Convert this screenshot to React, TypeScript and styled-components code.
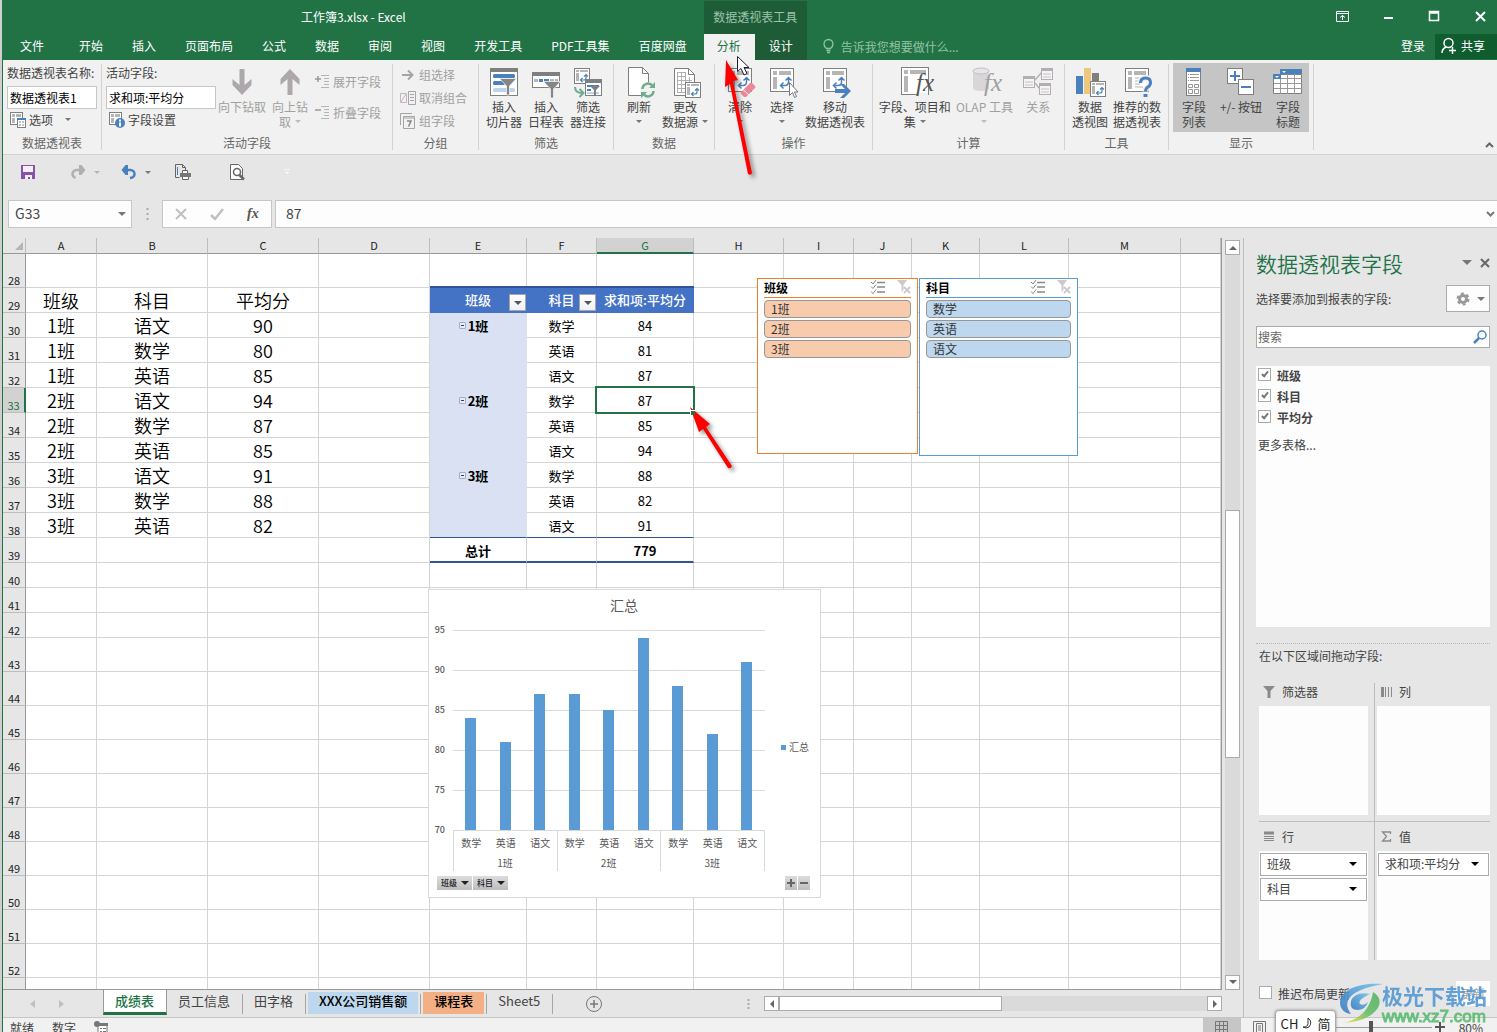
import React from "react";
import styled, { createGlobalStyle, css } from "styled-components";

const GREEN = "#217346";
const FONT = '"Noto Sans CJK SC", "Open Sans", sans-serif';

const Global = createGlobalStyle`
  *, *::before, *::after { box-sizing: border-box; }
  html, body { margin: 0; height: 100%; overflow: hidden; }
  body { font: 12px/15px ${FONT}; color: #444; background: #e6e6e6; }
  button, input { font: inherit; color: inherit; margin: 0; }
  button { padding: 0; border: 0; background: none; }
  svg { display: block; flex: none; overflow: visible; }
`;

/* ---------- window frame ---------- */
const Desktop = styled.div`
  position: relative;
  height: 100vh;
  padding-left: 2px;
  background: #cfcfcf;
  overflow: hidden;
`;
const Window = styled.div`
  height: 100%;
  display: flex;
  flex-direction: column;
  border-left: 1px solid ${GREEN};
  background: #e6e6e6;
`;
const Caret = styled.span<{ $c?: string; $s?: number }>`
  display: inline-block;
  width: 0;
  height: 0;
  border: ${(p) => p.$s ?? 3}px solid transparent;
  border-top-color: ${(p) => p.$c ?? "#777"};
  border-bottom: 0;
`;

/* ---------- header ---------- */
const Header = styled.header`
  flex: none;
  display: flex;
  height: 60px;
  background: ${GREEN};
  color: #fff;
`;
const HeadBlock = styled.div<{ $grow?: boolean }>`
  display: flex;
  flex-direction: column;
  flex: ${(p) => (p.$grow ? 1 : "none")};
`;
const TitleRow = styled.div`
  height: 34px;
  line-height: 34px;
  text-align: center;
`;
const TabRow = styled.nav`
  flex: 1;
  display: flex;
  gap: 1px;
  padding-right: 3px;
`;
const Tab = styled.button<{ $file?: boolean; $active?: boolean }>`
  padding: 0 ${(p) => (p.$file ? 17 : 14)}px 4px;
  margin-right: ${(p) => (p.$file ? 3 : 0)}px;
  ${(p) =>
    p.$active &&
    css`
      background: #f1f1f1;
      color: ${GREEN};
      padding: 0 14px 4px 13px;
    `}
`;
const Context = styled(HeadBlock)`
  margin-top: 1px;
  background: #1e5c38;
`;
const ContextTitle = styled.div`
  height: 33px;
  line-height: 32px;
  text-align: center;
  color: #9cc3ab;
`;
const ContextTabs = styled.nav`
  flex: 1;
  display: flex;
`;
const WinButtons = styled.div`
  height: 34px;
  display: flex;
  justify-content: flex-end;
  align-items: center;
  gap: 33px;
  padding: 0 10px 2px 0;
`;
const TellRow = styled.div`
  flex: 1;
  display: flex;
  align-items: stretch;
`;
const TellMe = styled.button`
  display: flex;
  align-items: center;
  gap: 7px;
  padding: 0 0 2px 16px;
  color: #93c2a3;
`;
const SignIn = styled.button`
  margin-left: auto;
  padding: 0 10px 4px;
`;
const Share = styled.button`
  display: flex;
  align-items: center;
  gap: 4px;
  height: 25px;
  padding: 0 12px 3px 6px;
  background: #0f5c2f;
`;

/* ---------- ribbon ---------- */
const Ribbon = styled.div`
  flex: none;
  height: 95px;
  display: flex;
  position: relative;
  padding: 4px 0;
  background: #f1f1f1;
  border-bottom: 1px solid #d2d2d2;
`;
const Group = styled.section<{ $w: number }>`
  flex: none;
  width: ${(p) => p.$w}px;
  display: flex;
  flex-direction: column;
  border-right: 1px solid #d2d2d2;
`;
const GroupBody = styled.div<{ $pad?: number }>`
  flex: 1;
  display: flex;
  padding: 0 ${(p) => p.$pad ?? 4}px;
`;
const GroupName = styled.h2`
  margin: 0;
  height: 15px;
  font: inherit;
  text-align: center;
  color: #666;
`;
const BigButton = styled.button<{ $w: number; $off?: boolean }>`
  width: ${(p) => p.$w}px;
  display: flex;
  flex-direction: column;
  align-items: center;
  padding-top: 3px;
  white-space: nowrap;
  color: ${(p) => (p.$off ? "#a0a0a0" : "#444")};
  span.line {
    display: flex;
    align-items: center;
    gap: 4px;
    height: 15px;
  }
`;
const Pressed = styled.div`
  display: flex;
  height: 69px;
  margin-top: -1px;
  padding-top: 1px;
  background: #c5c5c5;
`;
const FieldColumn = styled.div`
  display: flex;
  flex-direction: column;
  align-items: flex-start;
  padding-top: 1px;
`;
const RibbonInput = styled.input<{ $w: number }>`
  width: ${(p) => p.$w}px;
  height: 23px;
  margin-top: 6px;
  padding: 0 2px 1px;
  border: 1px solid #c6c6c6;
  background: #fff;
  color: #000;
`;
const SmallButton = styled.button<{ $off?: boolean; $h?: number }>`
  display: flex;
  align-items: center;
  gap: 3px;
  height: ${(p) => p.$h ?? 23}px;
  padding: 0 0 2px 3px;
  white-space: nowrap;
  color: ${(p) => (p.$off ? "#a0a0a0" : "#444")};
  ${Caret} { margin-left: 9px; }
`;
const SmallStack = styled.div<{ $top: number }>`
  display: flex;
  flex-direction: column;
  padding-top: ${(p) => p.$top}px;
`;
const Collapse = styled.button`
  margin-left: auto;
  align-self: flex-end;
  padding: 0 3px 2px 0;
`;

/* ---------- quick access and formula bar ---------- */
const QuickBar = styled.div`
  flex: none;
  height: 35px;
  display: flex;
  align-items: center;
  padding: 0 0 1px 17px;
`;
const QuickButton = styled.button<{ $w: number }>`
  width: ${(p) => p.$w}px;
  display: flex;
  align-items: center;
  gap: 8px;
`;
const FormulaRow = styled.div`
  flex: none;
  display: flex;
  height: 48px;
  padding: 10px 0 10px 5px;
`;
const Box = styled.div`
  display: flex;
  align-items: center;
  border: 1px solid #c6c6c6;
  background: #fdfdfd;
`;
const NameBox = styled(Box)`
  width: 124px;
  padding-right: 5px;
  input {
    flex: 1;
    min-width: 0;
    padding: 0 6px 1px;
    border: 0;
    background: none;
    font-size: 14px;
  }
`;
const Grip = styled.div`
  width: 30px;
  display: grid;
  place-items: center;
`;
const FxBox = styled(Box)`
  width: 110px;
  justify-content: space-between;
  padding: 0 11px 0 12px;
`;
const FormulaBox = styled(Box)`
  flex: 1;
  margin-left: 3px;
  padding-right: 2px;
  border-right: 0;
  input {
    flex: 1;
    border: 0;
    padding: 0 10px 1px;
    background: none;
    font-size: 14px;
  }
`;

/* ---------- sheet ---------- */
const Main = styled.main`
  flex: 1;
  min-height: 0;
  display: flex;
`;
const SheetColumn = styled.div`
  flex: 1;
  min-width: 0;
  display: flex;
  flex-direction: column;
`;
const GridRow = styled.div`
  flex: 1;
  min-height: 0;
  display: flex;
`;
const Canvas = styled.div`
  flex: 1;
  min-width: 0;
  position: relative;
  overflow: hidden;
  border-right: 1px solid #999;
  border-bottom: 1px solid #999;
  background: #fff;
`;
const Grid = styled.table`
  width: 100%;
  table-layout: fixed;
  border-collapse: separate;
  border-spacing: 0;
  color: #000;
`;
const ColHead = styled.th<{ $on?: boolean }>`
  height: 16px;
  padding: 0;
  font-weight: 400;
  font-size: 11px;
  line-height: 13px;
  background: ${(p) => (p.$on ? "#d2d2d2" : "#e6e6e6")};
  color: ${(p) => (p.$on ? GREEN : "#222")};
  border-right: 1px solid #bdbdbd;
  border-bottom: ${(p) => (p.$on ? `2px solid ${GREEN}` : "1px solid #999")};
`;
const RowHead = styled.th<{ $on?: boolean }>`
  padding: 0;
  vertical-align: bottom;
  font-weight: 400;
  font-size: 11px;
  line-height: 13px;
  background: ${(p) => (p.$on ? "#d2d2d2" : "#e6e6e6")};
  color: ${(p) => (p.$on ? GREEN : "#222")};
  border-right: ${(p) => (p.$on ? `2px solid ${GREEN}` : "1px solid #999")};
  border-bottom: 1px solid #bdbdbd;
`;
type Kind = "plain" | "head" | "band" | "last" | "bandLast" | "total";
const Cell = styled.td<{ $kind: Kind; $big?: boolean; $bold?: boolean }>`
  position: relative;
  padding: ${(p) => (p.$big || p.$kind === "head" ? 0 : 2)}px 0 0;
  text-align: center;
  white-space: nowrap;
  border-right: 1px solid #d4d4d4;
  border-bottom: 1px solid #d4d4d4;
  font-size: ${(p) => (p.$big ? 18 : 13)}px;
  line-height: 20px;
  font-weight: ${(p) => (p.$bold ? 700 : p.$big ? 350 : 400)};
  ${(p) =>
    p.$kind === "head" &&
    css`
      background: #4472c4;
      color: #fff;
      font-weight: 500;
      border-color: #4472c4;
      box-shadow: 0 -2px 0 #2f5597;
    `}
  ${(p) =>
    (p.$kind === "band" || p.$kind === "bandLast") &&
    css`
      background: #d9e1f2;
      border-color: #d9e1f2;
    `}
  ${(p) => (p.$kind === "last" || p.$kind === "bandLast") && "border-bottom: 1px solid #2f5597;"}
  ${(p) => p.$kind === "total" && "border-bottom: 2px solid #2f5597;"}
`;
const Selection = styled.span`
  position: absolute;
  z-index: 1;
  inset: -2px;
  border: 2px solid ${GREEN};
  &::after {
    content: "";
    position: absolute;
    right: -2px;
    bottom: -3px;
    width: 5px;
    height: 5px;
    background: ${GREEN};
    border: solid #fff;
    border-width: 1px 0 0 1px;
  }
`;
const FilterButton = styled.button`
  position: absolute;
  right: 0;
  bottom: 1px;
  width: 17px;
  height: 17px;
  display: grid;
  place-items: center;
  border: 1px solid #a6a6a6;
  background: linear-gradient(#fff, #eef0f4);
`;
const ItemLabel = styled.span`
  position: relative;
`;
const Toggle = styled.button`
  position: absolute;
  right: 100%;
  top: 6px;
  width: 7px;
  height: 7px;
  margin-right: 2px;
  display: grid;
  place-items: center;
  border: 1px solid #a3aec4;
  border-radius: 1px;
  background: #e6ebf5;
  &::after {
    content: "";
    width: 3px;
    height: 1px;
    background: #33415f;
  }
`;

/* ---------- slicers ---------- */
const Slicer = styled.section<{ $x: number; $w: number; $h: number; $line: string }>`
  position: absolute;
  left: ${(p) => p.$x}px;
  top: 40px;
  width: ${(p) => p.$w}px;
  height: ${(p) => p.$h}px;
  padding: 0 6px;
  border: 1px solid ${(p) => p.$line};
  background: #fff;
  color: #000;
`;
const SlicerHead = styled.header<{ $line: string }>`
  display: flex;
  align-items: center;
  gap: 12px;
  height: 19px;
  margin-bottom: 2px;
  padding-bottom: 2px;
  border-bottom: 1px solid ${(p) => p.$line};
  h3 {
    flex: 1;
    margin: 0;
    font: inherit;
    font-weight: 700;
  }
`;
const SlicerItem = styled.button<{ $fill: string }>`
  display: block;
  width: 100%;
  height: 18px;
  margin-bottom: 2px;
  padding: 0 6px 1px;
  border: 1px solid #979797;
  border-radius: 4px;
  background: ${(p) => p.$fill};
  text-align: left;
  font-size: 12px;
  line-height: 14px;
  color: #333;
`;

/* ---------- chart ---------- */
const ChartFrame = styled.figure`
  position: absolute;
  left: 425px;
  top: 351px;
  width: 393px;
  height: 309px;
  margin: 0;
  border: 1px solid #d9d9d9;
  background: #fff;
  text { font-family: ${FONT}; fill: #595959; }
`;
const ChartFoot = styled.figcaption`
  display: flex;
  gap: 1px;
  padding: 0 10px 0 8px;
`;
const ChartButton = styled.button`
  display: flex;
  align-items: center;
  gap: 4px;
  height: 14px;
  padding: 0 3px 0 4px;
  background: linear-gradient(#dcdcdc, #bdbdbd);
  font-size: 8px;
  font-weight: 500;
  line-height: 12px;
  color: #222;
`;
const Push = styled.span`
  flex: 1;
`;
const ZoomField = styled.button`
  width: 12px;
  height: 14px;
  display: grid;
  place-items: center;
  background: linear-gradient(#dcdcdc, #bdbdbd);
`;

/* ---------- scroll bars and sheet tabs ---------- */
const VScroll = styled.div`
  flex: none;
  width: 15px;
  margin: 2px 3px 0;
  display: flex;
  flex-direction: column;
  background: #dadada;
`;
const HScroll = styled.div`
  width: 458px;
  height: 15px;
  margin-left: 14px;
  display: flex;
  background: #dadada;
`;
const ScrollButton = styled.button`
  flex: none;
  width: 15px;
  height: 15px;
  display: grid;
  place-items: center;
  border: 1px solid #ababab;
  background: #fdfdfd;
`;
const Thumb = styled.div<{ $g: number }>`
  flex: ${(p) => p.$g} 1 0;
  border: 1px solid #ababab;
  background: #fff;
`;
const Space = styled.div<{ $g: number }>`
  flex: ${(p) => p.$g} 1 0;
`;
const TabBar = styled.div`
  flex: none;
  height: 27px;
  display: flex;
  align-items: center;
  padding-right: 21px;
`;
const SheetArrows = styled.div`
  width: 100px;
  display: flex;
  gap: 24px;
  padding-left: 27px;
`;
const SheetTab = styled.button<{ $active?: boolean; $fill?: string }>`
  height: 22px;
  margin: 0 ${(p) => (p.$fill ? 2 : 0)}px 1px;
  padding: 0 ${(p) => (p.$fill ? 11 : 12)}px 4px 11px;
  font-size: 13px;
  line-height: 18px;
  color: ${(p) => (p.$fill ? "#000" : "#444")};
  background: ${(p) => p.$fill ?? "none"};
  font-weight: ${(p) => (p.$fill ? 500 : 400)};
  ${(p) =>
    p.$active &&
    css`
      height: 25px;
      margin: -1px 0 1px;
      padding: 0 12px 1px 11px;
      border: solid #999;
      border-width: 0 1px;
      border-bottom: 3px solid ${GREEN};
      background: #fff;
      color: ${GREEN};
      font-weight: 500;
    `}
`;
const TabRule = styled.span`
  width: 1px;
  height: 20px;
  background: #a6a6a6;
`;
const AddSheet = styled.button`
  margin-left: 33px;
`;

/* ---------- field pane ---------- */
const Pane = styled.aside`
  flex: none;
  width: 254px;
  display: flex;
  flex-direction: column;
  padding: 8px 7px 11px 12px;
  border-left: 1px solid #bdbdbd;
`;
const PaneTitle = styled.div`
  flex: none;
  height: 36px;
  display: flex;
  align-items: center;
  gap: 8px;
  padding-bottom: 3px;
  h1 {
    flex: 1;
    margin: 0;
    font-size: 21px;
    line-height: 30px;
    font-weight: 350;
    color: ${GREEN};
  }
`;
const PaneTool = styled.div`
  flex: none;
  display: flex;
  align-items: center;
  justify-content: space-between;
  margin-top: 3px;
`;
const GearButton = styled.button`
  width: 44px;
  height: 27px;
  display: flex;
  align-items: center;
  justify-content: space-between;
  padding: 0 4px 0 9px;
  border: 1px solid #ababab;
  background: #fdfdfd;
`;
const Search = styled.div`
  flex: none;
  height: 22px;
  display: flex;
  align-items: center;
  margin-top: 14px;
  padding: 0 2px 0 1px;
  border: 1px solid #ababab;
  background: #fff;
  input {
    flex: 1;
    min-width: 0;
    padding: 0 0 2px;
    border: 0;
    outline: 0;
    background: none;
    &::placeholder { color: #666; opacity: 1; }
  }
`;
const FieldList = styled.div`
  flex: 1;
  min-height: 0;
  margin-top: 18px;
  padding-left: 2px;
  background: #fdfdfd;
`;
const Check = styled.label<{ $bold?: boolean }>`
  display: flex;
  align-items: center;
  gap: 6px;
  height: 21px;
  padding-bottom: ${(p) => (p.$bold ? 3 : 0)}px;
  font-weight: ${(p) => (p.$bold ? 700 : 400)};
  input {
    appearance: none;
    width: 13px;
    height: 13px;
    margin-bottom: 2px;
    border: 1px solid #ababab;
    background: #fff;
    position: relative;
  }
  input:checked::after {
    content: "";
    position: absolute;
    left: 4px;
    top: 1px;
    width: 4px;
    height: 7px;
    border: solid #777;
    border-width: 0 2px 2px 0;
    transform: rotate(40deg);
  }
`;
const MoreTables = styled.a`
  display: block;
  margin-top: 8px;
  color: #444;
  text-decoration: none;
`;
const DragHint = styled.p`
  flex: none;
  margin: 16px 0 20px;
  padding: 4px 0 0 3px;
  border-top: 1px dotted #b5b5b5;
`;
const Areas = styled.div`
  flex: none;
  display: grid;
  grid-template-columns: 115px 1fr;
  margin-left: 3px;
`;
const Area = styled.section<{ $right?: boolean; $low?: boolean }>`
  padding: 0 ${(p) => (p.$right ? 0 : 6)}px ${(p) => (p.$low ? 0 : 6)}px ${(p) => (p.$right ? 2 : 0)}px;
  border-left: ${(p) => (p.$right ? "1px solid #bdbdbd" : 0)};
  border-top: ${(p) => (p.$low ? "1px solid #bdbdbd" : 0)};
  h3 {
    display: flex;
    align-items: center;
    gap: 7px;
    height: ${(p) => (p.$low ? 29 : 23)}px;
    margin: 0;
    padding: 0 0 ${(p) => (p.$low ? 0 : 6)}px 4px;
    font: inherit;
  }
`;
const DropZone = styled.div`
  height: 109px;
  padding: 2px 1px;
  background: #fdfdfd;
`;
const FieldChip = styled.button`
  width: 100%;
  height: 23px;
  display: flex;
  align-items: center;
  justify-content: space-between;
  margin-bottom: 2px;
  padding: 0 9px 2px 6px;
  border: 1px solid #ababab;
  background: #fff;
`;
const PaneFoot = styled.div`
  flex: none;
  display: flex;
  justify-content: space-between;
  align-items: center;
  height: 25px;
  margin: 21px 0 0 3px;
`;
const UpdateButton = styled.button`
  width: 34px;
  height: 25px;
  background: #fdfdfd;
  color: #aaa;
`;

/* ---------- status bar ---------- */
const Status = styled.footer`
  flex: none;
  height: 15px;
  overflow: hidden;
  border-top: 1px solid #c6c6c6;
  background: #f1f1f1;
`;
const StatusRow = styled.div`
  height: 18px;
  display: flex;
  align-items: center;
  padding: 0 14px 0 7px;
`;
const StatusText = styled.span`
  margin-right: 18px;
`;
const ViewButton = styled.button<{ $on?: boolean }>`
  width: 38px;
  height: 18px;
  display: grid;
  place-items: center;
  background: ${(p) => (p.$on ? "#c6c6c6" : "none")};
`;
const ZoomRange = styled.input`
  appearance: none;
  width: 110px;
  height: 12px;
  margin: 0 3px 0 43px;
  background: linear-gradient(#999, #999) center / 100% 1px no-repeat;
  &::-webkit-slider-thumb {
    appearance: none;
    width: 4px;
    height: 12px;
    background: #555;
  }
`;
const ZoomValue = styled.span`
  margin-left: 14px;
`;
const Ime = styled.div`
  position: absolute;
  right: 161px;
  bottom: -4px;
  width: 61px;
  height: 26px;
  display: flex;
  align-items: center;
  justify-content: center;
  gap: 4px;
  border: 1px solid #aaa;
  border-radius: 4px;
  background: #fff;
  box-shadow: 0 0 3px #888;
  font-size: 13px;
  color: #222;
`;
const Watermark = styled.div`
  position: absolute;
  right: 10px;
  bottom: 8px;
  display: flex;
  opacity: 0.85;
  p {
    margin: 0;
    font-size: 21px;
    font-weight: 700;
    line-height: 24px;
    color: #4b93d1;
  }
  small {
    display: block;
    margin-top: 3px;
    font: 500 17px/14px "Liberation Sans", sans-serif;
    color: #52b96a;
    -webkit-text-stroke: 1px #52b96a;
  }
`;
const Pointer = styled.svg<{ $x: number; $y: number; $shadow?: boolean }>`
  position: absolute;
  left: ${(p) => p.$x}px;
  top: ${(p) => p.$y}px;
  pointer-events: none;
  filter: ${(p) => (p.$shadow ? "drop-shadow(3px 3px 2px #0006)" : "none")};
`;

/* ---------- icons ---------- */
const G = "#7f7f7f";
const B = "#4a81bd";
const I: React.FC<{ w?: number; h?: number; children: React.ReactNode }> = ({ w = 32, h = 32, children }) => (
  <svg width={w} height={h} viewBox={`0 0 ${w} ${h}`} fill="none" aria-hidden="true">
    {children}
  </svg>
);
const PivotArt = ({ x = 0, y = 0, w = 23, h = 23, cycle = true }: { x?: number; y?: number; w?: number; h?: number; cycle?: boolean }) => (
  <g transform={`translate(${x} ${y})`}>
    <rect x=".5" y=".5" width={w} height={h} fill="#fff" stroke={G} />
    <path d={`M3 3h4v4H3zM9 3h${w - 11}v4H9zM3 9h4v${h - 11}H3z`} fill="#b5b5b5" />
    {cycle && (
      <path d="M11 17.500h4q3.500 0 3.500-3.500v-4M13.500 14.500l-3 3 3 3M15.500 12.500l3-3 3 3" stroke={B} strokeWidth="1.500" />
    )}
  </g>
);
const PivotSmall = ({ x, y }: { x: number; y: number }) => (
  <g transform={`translate(${x} ${y})`}>
    <rect x=".5" y=".5" width="15" height="15" fill="#fff" stroke={G} />
    <path d="M2 2h3v2H2zM6 2h8v2H6zM2 5h3v8H2z" fill="#b5b5b5" />
    <path d="M7 12h3q2 0 2-2V7M8.500 10l-2 2 2 2M10 8.500l2-2 2 2" stroke={B} strokeWidth="1.200" />
  </g>
);
const Funnel = ({ x, y }: { x: number; y: number }) => (
  <path
    transform={`translate(${x} ${y})`}
    d="M.5 .5h17l-7 7.500v9h-3v-9z"
    fill="#858585"
    stroke="#f1f1f1"
    strokeWidth=".8"
  />
);
const Fx = ({ x, y, c = "#555" }: { x: number; y: number; c?: string }) => (
  <text x={x} y={y} fontFamily="Liberation Serif, serif" fontStyle="italic" fontSize="25" fill={c}>
    fx
  </text>
);
const icons = {
  slicer: (
    <I>
      <rect x="2.500" y="1.500" width="27" height="27" fill="#fff" stroke={G} />
      <path d="M2 1h28v4H2z" fill={G} />
      <rect x="5" y="7" width="22" height="4" rx="1.500" fill={B} />
      <rect x="5" y="14" width="12" height="4" rx="1.500" fill={B} />
      <rect x="5" y="21" width="22" height="4" rx="1.500" fill="#bfd3ea" />
      <Funnel x={11} y={11} />
    </I>
  ),
  timeline: (
    <I>
      <rect x="2.500" y="5.500" width="27" height="15" fill="#fff" stroke={G} />
      <path d="M2 5h28v4H2z" fill={G} />
      <path d="M4 12h4v3H4zM20 12h4v3h-4zM25 12h3v3h-3z" fill="#b5b5b5" />
      <path d="M9 12h4v3H9zM14 12h5v3h-5z" fill={B} />
      <Funnel x={13} y={14} />
    </I>
  ),
  connect: (
    <I>
      <PivotSmall x={2} y={1} />
      <path d="M3 20q0 6 7 6M7.500 22l4 4-4 4" stroke="#6fab8f" strokeWidth="2" />
      <rect x="13.500" y="12.500" width="16" height="16" fill="#fff" stroke={G} />
      <path d="M13 12h17v4H13z" fill={G} />
      <path d="M15 18h12v2H15zM15 22h4v2h-4z" fill={B} />
      <path d="M15 25h12v2H15z" fill="#bfd3ea" />
      <path d="M18 19h10l-4 4v5h-2v-5z" fill={G} />
    </I>
  ),
  refresh: (
    <I>
      <path d="M5.500 .5h14l6 6v22h-20z" fill="#fff" stroke={G} />
      <path d="M19.500 .5v6h6" stroke={G} />
      <circle cx="25" cy="23" r="8" fill="#f1f1f1" />
      <path d="M19.500 22a5.500 5.500 0 0 1 10-3M30.500 24a5.500 5.500 0 0 1-10 3" stroke="#6fab8f" strokeWidth="2.500" />
      <path d="M32 15v6h-6zM18 31v-6h6z" fill="#6fab8f" />
    </I>
  ),
  source: (
    <I>
      <path d="M5.500 1.500h14l6 6v21h-20z" fill="#fff" stroke={G} />
      <path d="M19.500 1.500v6h6" stroke={G} />
      <path d="M8 5.500h9M8 9.500h9M8 13.500h15M8 17.500h10M8 21.500h8M8 25.500h8M8.500 5v21M12.500 5v21M16.500 5v21M20.500 10v6" stroke="#b0b0b0" />
      <PivotSmall x={16} y={15} />
    </I>
  ),
  clear: (
    <I>
      <PivotArt x={4} y={1} />
      <path d="M17 25l9-9q1-1 2 0l3 3q1 1 0 2l-9 9h-2l-3-3q-1-1 0-2z" fill="#e8899a" />
      <path d="M19 22.500l6 5.500" stroke="#f1f1f1" />
    </I>
  ),
  select: (
    <I>
      <PivotArt x={4} y={1} />
      <path d="M23.500 15.500v13l3-3 2 5 2-1-2-4.500h3.500z" fill="#fff" stroke="#777" />
    </I>
  ),
  move: (
    <I>
      <PivotArt x={4} y={1} />
      <path d="M16 22h10l-5-5h4l7 7-7 7h-4l5-5H16z" fill={B} />
    </I>
  ),
  fields: (
    <I>
      <PivotArt x={2} y={0} w={27} h={27} cycle={false} />
      <path d="M19 26h10v3H17z" fill="#f1f1f1" />
      <Fx x={17} y={24} />
    </I>
  ),
  olap: (
    <I>
      <path d="M5 3v18q0 3 8 3t8-3V3z" fill="#d9d5d9" />
      <ellipse cx="13" cy="4" rx="8" ry="3" fill="#e8e5e8" stroke="#c4c0c4" />
      <Fx x={16} y={24} c="#a0a0a0" />
    </I>
  ),
  relation: (
    <I>
      <path d="M13 13l7-8M13 16l5 6" stroke="#b5b5b5" strokeWidth="1.500" />
      {[[1, 9], [19, 1], [17, 16]].map(([x, y]) => (
        <g key={x} transform={`translate(${x} ${y})`}>
          <rect x=".5" y=".5" width="11" height="11" fill="#f7f4f7" stroke="#b0b0b0" />
          <path d="M0 0h12v3H0z" fill="#b0b0b0" />
          <path d="M2 6h8M2 9h8" stroke="#c9bfc9" />
        </g>
      ))}
    </I>
  ),
  pivotChart: (
    <I>
      <path d="M2 9h7v18H2z" fill={B} />
      <path d="M10 1h7v26h-7z" fill="#edc77d" />
      <path d="M18 6h7v12h-7z" fill={G} />
      <PivotSmall x={16} y={14} />
    </I>
  ),
  recommend: (
    <I>
      <PivotArt x={4} y={1} cycle={false} />
      <path d="M14 11h8M14 14h6M14 17h5M14 20h8" stroke="#b5b5b5" />
      <path d="M19.500 16q0-5 5-5t5 4.500q0 3-2.500 4.500t-2.500 4.500" stroke="#f1f1f1" strokeWidth="6" />
      <path d="M19.500 16q0-5 5-5t5 4.500q0 3-2.500 4.500t-2.500 4.500" stroke={B} strokeWidth="3" />
      <path d="M22.500 27h4v3h-4z" fill={B} />
    </I>
  ),
  fieldList: (
    <I>
      <rect x="8.500" y="1.500" width="14" height="27" fill="#fff" stroke={G} />
      <path d="M8 1h15v4H8z" fill={B} />
      <path d="M10 7.500h1m1 0h9M10 10.500h1m1 0h9M10 13.500h1m1 0h9" stroke="#999" />
      <path d="M10.500 17.500h4v3h-4zM16.500 17.500h4v3h-4zM10.500 22.500h4v4h-4zM16.500 22.500h4v4h-4z" stroke="#999" />
    </I>
  ),
  plusMinus: (
    <I>
      <rect x="2.500" y="1.500" width="15" height="15" fill="#fff" stroke={G} />
      <path d="M5 9h10M10 4v10" stroke={B} strokeWidth="2" />
      <rect x="13.500" y="12.500" width="15" height="15" fill="#fff" stroke={G} />
      <path d="M16 20h10" stroke={B} strokeWidth="2" />
    </I>
  ),
  fieldHead: (
    <I>
      <path d="M1.500 7.500h28v19h-28z" fill="#fff" stroke={G} />
      <path d="M8 2h22v5H8zM1 7h8v5H1z" fill={B} />
      <path d="M8.500 12v15M15.500 7v20M22.500 7v20M9 11.500h21M2 16.500h28M2 21.500h28" stroke="#999" />
      <path d="M10 4h4l-2 2zM3 9h4l-2 2z" fill="#fff" />
    </I>
  ),
};
const BigArrow = ({ up }: { up?: boolean }) => (
  <I>
    <path
      transform={up ? "rotate(180 16 15)" : undefined}
      d="M13.500 2h5v16l7-6v6L16 28l-9.500-10v-6l7 6z"
      fill="#aca8ac"
    />
  </I>
);
const TableIcon = ({ info }: { info?: boolean }) => (
  <I w={16} h={16}>
    <rect x=".5" y=".5" width="12" height="12" fill="#fff" stroke={G} />
    <path d="M2 2h3v3H2zM6 2h5v3H6zM2 6h3v5H2z" fill="#b5b5b5" />
    {info ? (
      <>
        <circle cx="11" cy="11" r="5" fill={B} />
        <path d="M11 7.500v2M11 10.500v4" stroke="#fff" strokeWidth="2" />
      </>
    ) : (
      <>
        <rect x="7.500" y="6.500" width="8" height="9" fill="#fff" stroke={G} />
        <path d="M7 6h9v2H7z" fill={B} />
        <path d="M9 10h2m1 0h2M9 13h2m1 0h2" stroke={G} />
      </>
    )}
  </I>
);
const ExpandIcon = ({ plus }: { plus?: boolean }) => (
  <I w={15} h={15}>
    <path d={plus ? "M0 5h6M3 2v6" : "M0 5h6"} stroke="#999" strokeWidth="1.500" />
    <path d="M6 1.500h8M9 4.500h5M9 7.500h5M9 10.500h5M6 13.500h8" stroke="#b5b5b5" />
  </I>
);

const Lines = ({ icon, a, b, w, off, caret }: { icon: React.ReactNode; a: string; b?: string; w: number; off?: boolean; caret?: boolean }) => (
  <BigButton $w={w} $off={off} disabled={off}>
    {icon}
    <span className="line">{a}</span>
    <span className="line">
      {b}
      {caret && <Caret $c={off ? "#bbb" : "#777"} />}
    </span>
  </BigButton>
);

/* ---------- sheet data ---------- */
const cols: [string, number | undefined][] = [
  ["A", 71], ["B", 111], ["C", 111], ["D", 111], ["E", 97], ["F", 70], ["G", 97],
  ["H", 90], ["I", 70], ["J", 58], ["K", 68], ["L", 89], ["M", 112], ["", undefined],
];
const left: Record<number, string[]> = {
  29: ["班级", "科目", "平均分"],
  30: ["1班", "语文", "90"],
  31: ["1班", "数学", "80"],
  32: ["1班", "英语", "85"],
  33: ["2班", "语文", "94"],
  34: ["2班", "数学", "87"],
  35: ["2班", "英语", "85"],
  36: ["3班", "语文", "91"],
  37: ["3班", "数学", "88"],
  38: ["3班", "英语", "82"],
};
const pivot: Record<number, string[]> = {
  29: ["班级", "科目", "求和项:平均分"],
  30: ["1班", "数学", "84"],
  31: ["", "英语", "81"],
  32: ["", "语文", "87"],
  33: ["2班", "数学", "87"],
  34: ["", "英语", "85"],
  35: ["", "语文", "94"],
  36: ["3班", "数学", "88"],
  37: ["", "英语", "82"],
  38: ["", "语文", "91"],
  39: ["总计", "", "779"],
};
const rows = Array.from({ length: 25 }, (_, i) => 28 + i);
const rowHeight = (r: number) => (r === 28 || r > 42 ? 34 : 25);

function cellKind(r: number, c: number): Kind {
  if (c < 4 || c > 6 || !pivot[r]) return "plain";
  if (r === 29) return "head";
  if (r === 39) return "total";
  if (r === 38) return c === 4 ? "bandLast" : "last";
  return c === 4 ? "band" : "plain";
}

const Sheet = () => (
  <Grid aria-label="成绩表">
    <colgroup>
      <col style={{ width: 23 }} />
      {cols.map(([n, w], i) => (
        <col key={n + i} style={{ width: w }} />
      ))}
    </colgroup>
    <thead>
      <tr>
        <ColHead aria-label="全选">
          <svg width="20" height="8" viewBox="0 0 20 8" aria-hidden="true">
            <path d="M20 0v8h-8z" fill="#b5b5b5" />
          </svg>
        </ColHead>
        {cols.map(([n], i) => (
          <ColHead key={i} scope="col" $on={n === "G"}>
            {n}
          </ColHead>
        ))}
      </tr>
    </thead>
    <tbody>
      {rows.map((r) => (
        <tr key={r} style={{ height: rowHeight(r) }}>
          <RowHead scope="row" $on={r === 33}>
            {r}
          </RowHead>
          {cols.map((_, c) => {
            const big = c < 3;
            const text = big ? left[r]?.[c] : c > 3 && c < 7 ? pivot[r]?.[c - 4] : undefined;
            const member = c === 4 && r > 29 && r < 39 && text;
            return (
              <Cell key={c} $kind={cellKind(r, c)} $big={big} $bold={!!member || (r === 39 && c > 3)}>
                {member ? (
                  <ItemLabel>
                    <Toggle aria-label="折叠" />
                    {text}
                  </ItemLabel>
                ) : (
                  text
                )}
                {r === 29 && (c === 4 || c === 5) && (
                  <FilterButton aria-label="筛选">
                    <Caret $s={4} $c="#555" />
                  </FilterButton>
                )}
                {r === 33 && c === 6 && <Selection />}
              </Cell>
            );
          })}
        </tr>
      ))}
      <tr style={{ height: 34 }}>
        <RowHead />
        {cols.map((_, c) => (
          <Cell key={c} $kind="plain" />
        ))}
      </tr>
    </tbody>
  </Grid>
);

const SlicerBox = ({ title, items, x, w, h, line, fill }: { title: string; items: string[]; x: number; w: number; h: number; line: string; fill: string }) => (
  <Slicer $x={x} $w={w} $h={h} $line={line}>
    <SlicerHead $line={line}>
      <h3>{title}</h3>
      <button aria-label="多选">
        <I w={14} h={14}>
          <path d="M6 2.500h8M6 7h8M6 12h8" stroke="#888" strokeWidth="1.500" />
          <path d="M0 2l2 2 3-4M0 6.500l2 2 3-4M0 11.500l2 2 3-4" stroke="#888" />
        </I>
      </button>
      <button aria-label="清除筛选器">
        <I w={14} h={14}>
          <path d="M0 0h10L6.500 5v5l-2 2V5z" fill="#cfc9cf" />
          <path d="M7 7l6 6M13 7l-6 6" stroke="#cfc9cf" strokeWidth="2" />
        </I>
      </button>
    </SlicerHead>
    {items.map((t) => (
      <SlicerItem key={t} $fill={fill}>
        {t}
      </SlicerItem>
    ))}
  </Slicer>
);

const scores = [84, 81, 87, 87, 85, 94, 88, 82, 91];
const subjects = ["数学", "英语", "语文"];
const Chart = () => (
  <ChartFrame>
    <svg width="391" height="286" viewBox="0 0 391 286" role="img" aria-label="汇总">
      <text x="195" y="21" fontSize="14" textAnchor="middle">汇总</text>
      {[95, 90, 85, 80, 75, 70].map((v, i) => (
        <g key={v}>
          <path d={`M24 ${40.5 + i * 40}h312`} stroke="#d9d9d9" />
          <text x="16" y={43 + i * 40} fontSize="9" fontWeight="500" textAnchor="end">{v}</text>
        </g>
      ))}
      {scores.map((v, i) => {
        const mid = 24 + (i + 0.5) * 34.5;
        return (
          <g key={i}>
            <rect x={Math.round(mid - 5)} y={240 - (v - 70) * 8} width="11" height={(v - 70) * 8} fill="#5b9bd5" />
            <text x={mid + 1} y="257" fontSize="10" textAnchor="middle">{subjects[i % 3]}</text>
          </g>
        );
      })}
      {[0, 1, 2, 3].map((i) => (
        <path key={i} d={`M${Math.round(24 + i * 103.6) + 0.5} 240v41`} stroke="#d9d9d9" />
      ))}
      {[1, 2, 3].map((n, i) => (
        <text key={n} x={76 + i * 103.6} y="277" fontSize="10" textAnchor="middle">{n}班</text>
      ))}
      <rect x="352" y="155" width="5" height="5" fill="#5b9bd5" />
      <text x="360" y="161" fontSize="10">汇总</text>
    </svg>
    <ChartFoot>
      <ChartButton>班级 <Caret $s={4} $c="#222" /></ChartButton>
      <ChartButton>科目 <Caret $s={4} $c="#222" /></ChartButton>
      <Push />
      <ZoomField aria-label="展开整个字段">
        <I w={8} h={8}><path d="M0 4h8M4 0v8" stroke="#666" strokeWidth="2" /></I>
      </ZoomField>
      <ZoomField aria-label="折叠整个字段">
        <I w={8} h={8}><path d="M0 4h8" stroke="#666" strokeWidth="2" /></I>
      </ZoomField>
    </ChartFoot>
  </ChartFrame>
);

const Tri = ({ d }: { d: string }) => (
  <I w={8} h={8}><path d={d} fill="#666" /></I>
);

const tabs = ["开始", "插入", "页面布局", "公式", "数据", "审阅", "视图", "开发工具", "PDF工具集", "百度网盘"];

export default function App() {
  return (
    <Desktop>
      <Global />
      <Window>
        <Header>
          <HeadBlock>
            <TitleRow>工作簿3.xlsx - Excel</TitleRow>
            <TabRow>
              <Tab $file>文件</Tab>
              {tabs.map((t) => <Tab key={t}>{t}</Tab>)}
            </TabRow>
          </HeadBlock>
          <Context>
            <ContextTitle>数据透视表工具</ContextTitle>
            <ContextTabs>
              <Tab $active>分析</Tab>
              <Tab>设计</Tab>
            </ContextTabs>
          </Context>
          <HeadBlock $grow>
            <WinButtons>
              <button aria-label="功能区显示选项">
                <I w={13} h={11}>
                  <path d="M.5 .5h12v10H.5zM1 2.500h11M6.500 9V4.500M4 6.500l2.500-2 2.500 2" stroke="#fff" />
                </I>
              </button>
              <button aria-label="最小化"><I w={13} h={11}><path d="M2 7h9" stroke="#fff" strokeWidth="2" /></I></button>
              <button aria-label="最大化"><I w={13} h={11}><path d="M1.500 .5h9v9h-9zM1 2h10" stroke="#fff" strokeWidth="1.500" /></I></button>
              <button aria-label="关闭"><I w={13} h={11}><path d="M2 1l9 9M11 1l-9 9" stroke="#fff" strokeWidth="2" /></I></button>
            </WinButtons>
            <TellRow>
              <TellMe>
                <I w={11} h={14}>
                  <path d="M3.500 9.500Q1 7.500 1 5a4.500 4.500 0 0 1 9 0q0 2.500-2.500 4.500zM3.500 11.500h4M4 13.500h3" stroke="#93c2a3" strokeWidth="1.300" />
                </I>
                告诉我您想要做什么...
              </TellMe>
              <SignIn>登录</SignIn>
              <Share>
                <I w={16} h={17}>
                  <circle cx="7.500" cy="6" r="4.500" stroke="#fff" strokeWidth="1.500" />
                  <path d="M1 16q0-4 4-6M8 13.500h7M11.500 10v7" stroke="#fff" strokeWidth="1.500" />
                </I>
                共享
              </Share>
            </TellRow>
          </HeadBlock>
        </Header>

        <Ribbon>
          <Group $w={99}>
            <GroupBody>
              <FieldColumn>
                <label htmlFor="pivotName">数据透视表名称:</label>
                <RibbonInput id="pivotName" $w={90} defaultValue="数据透视表1" />
                <SmallButton><TableIcon />选项 <Caret /></SmallButton>
              </FieldColumn>
            </GroupBody>
            <GroupName>数据透视表</GroupName>
          </Group>
          <Group $w={291}>
            <GroupBody>
              <FieldColumn>
                <label htmlFor="activeField">活动字段:</label>
                <RibbonInput id="activeField" $w={110} defaultValue="求和项:平均分" />
                <SmallButton><TableIcon info />字段设置</SmallButton>
              </FieldColumn>
              <Lines icon={<BigArrow />} a="向下钻取" w={52} off />
              <Lines icon={<BigArrow up />} a="向上钻" b="取" w={44} off caret />
              <SmallStack $top={3}>
                <SmallButton $off disabled $h={31}><ExpandIcon plus />展开字段</SmallButton>
                <SmallButton $off disabled $h={31}><ExpandIcon />折叠字段</SmallButton>
              </SmallStack>
            </GroupBody>
            <GroupName>活动字段</GroupName>
          </Group>
          <Group $w={86}>
            <GroupBody>
              <SmallStack $top={0}>
                <SmallButton $off disabled>
                  <I w={16} h={16}><path d="M2 8h10M8 3.500l4.500 4.500L8 12.500" stroke="#a5a5a5" strokeWidth="2" /></I>组选择
                </SmallButton>
                <SmallButton $off disabled>
                  <I w={16} h={16}><path d="M.5 3.500h6v9h-6zM1 12l5-8" stroke="#c4b4c4" /><path d="M8.500 1.500h7v13h-7zM10 4.500h4M10 7.500h4M10 10.500h4" stroke="#a5a5a5" /></I>取消组合
                </SmallButton>
                <SmallButton $off disabled>
                  <I w={16} h={16}><path d="M.5 12V.5H12M3.500 3.500h11v12h-11zM3 5h12" stroke="#a5a5a5" /><path d="M7 8h4l-2.500 5.500" stroke="#888" strokeWidth="1.500" /></I>组字段
                </SmallButton>
              </SmallStack>
            </GroupBody>
            <GroupName>分组</GroupName>
          </Group>
          <Group $w={135}>
            <GroupBody>
              <Lines icon={icons.slicer} a="插入" b="切片器" w={42} />
              <Lines icon={icons.timeline} a="插入" b="日程表" w={42} />
              <Lines icon={icons.connect} a="筛选" b="器连接" w={42} />
            </GroupBody>
            <GroupName>筛选</GroupName>
          </Group>
          <Group $w={101}>
            <GroupBody $pad={3}>
              <Lines icon={icons.refresh} a="刷新" w={44} caret />
              <Lines icon={icons.source} a="更改" b="数据源" w={48} caret />
            </GroupBody>
            <GroupName>数据</GroupName>
          </Group>
          <Group $w={158}>
            <GroupBody>
              <Lines icon={icons.clear} a="清除" w={42} caret />
              <Lines icon={icons.select} a="选择" w={42} caret />
              <Lines icon={icons.move} a="移动" b="数据透视表" w={64} />
            </GroupBody>
            <GroupName>操作</GroupName>
          </Group>
          <Group $w={192}>
            <GroupBody>
              <Lines icon={icons.fields} a="字段、项目和" b="集" w={76} caret />
              <Lines icon={icons.olap} a="OLAP 工具" w={64} off caret />
              <Lines icon={icons.relation} a="关系" w={44} off />
            </GroupBody>
            <GroupName>计算</GroupName>
          </Group>
          <Group $w={104}>
            <GroupBody>
              <Lines icon={icons.pivotChart} a="数据" b="透视图" w={42} />
              <Lines icon={icons.recommend} a="推荐的数" b="据透视表" w={52} />
            </GroupBody>
            <GroupName>工具</GroupName>
          </Group>
          <Group $w={145}>
            <GroupBody>
              <Pressed>
                <Lines icon={icons.fieldList} a="字段" b="列表" w={42} />
                <Lines icon={icons.plusMinus} a="+/- 按钮" w={52} />
                <Lines icon={icons.fieldHead} a="字段" b="标题" w={42} />
              </Pressed>
            </GroupBody>
            <GroupName>显示</GroupName>
          </Group>
          <Collapse aria-label="折叠功能区">
            <I w={9} h={6}><path d="M1 5l3.500-3.500L8 5" stroke="#666" strokeWidth="2" /></I>
          </Collapse>
        </Ribbon>

        <QuickBar>
          <QuickButton $w={50} aria-label="保存">
            <I w={16} h={16}>
              <path d="M1 1h14v14H1z" fill="#8753a8" />
              <path d="M3 2h10v6H3zM5 11h7v4h-2v-2H8v2H5z" fill="#f4eef8" />
            </I>
          </QuickButton>
          <QuickButton $w={51} aria-label="恢复">
            <I w={16} h={16}>
              <path d="M11 6H6.500a4 4 0 0 0-4 4q0 2.500 3 4" stroke="#b0b0b0" strokeWidth="2.500" />
              <path d="M9 1h2.500l4 5-4 5H9z" fill="#b0b0b0" />
            </I>
            <Caret $c="#b5b5b5" />
          </QuickButton>
          <QuickButton $w={53} aria-label="撤消">
            <I w={16} h={16}>
              <path d="M5 6h4.500a4 4 0 0 1 4 4q0 3.500-4.500 4" stroke={B} strokeWidth="2.500" />
              <path d="M7 1H4.500L.5 6l4 5H7z" fill={B} />
            </I>
            <Caret />
          </QuickButton>
          <QuickButton $w={55} aria-label="快速打印">
            <I w={18} h={18}>
              <path d="M1.500 1.500h7l3 3v3M1.500 1.500v13h4M8.500 1.500v3h3" stroke="#666" />
              <path d="M3.500 4v8" stroke={B} />
              <path d="M8.500 7.500h5v3h-5zM8.500 13.500h6v3h-6z" fill="#fff" stroke="#666" />
              <path d="M6 10h11v4H6z" fill="#777" />
            </I>
          </QuickButton>
          <QuickButton $w={55} aria-label="打印预览">
            <I w={16} h={18}>
              <path d="M1.500 1.500h8l4 4v11h-12z" fill="#fff" stroke="#666" />
              <circle cx="8" cy="9" r="3.500" stroke="#666" strokeWidth="1.500" />
              <path d="M10.500 12l4.500 4.500" stroke="#666" strokeWidth="2.500" />
            </I>
          </QuickButton>
          <QuickButton $w={10} aria-label="自定义">
            <I w={6} h={6}><path d="M0 .5h6M1 3h4L3 5z" stroke="#f5f5f5" fill="#f5f5f5" /></I>
          </QuickButton>
        </QuickBar>

        <FormulaRow>
          <NameBox>
            <input aria-label="名称框" defaultValue="G33" />
            <Caret $s={4} />
          </NameBox>
          <Grip>
            <I w={3} h={12}><path d="M1.500 0v12" stroke="#aaa" strokeWidth="2" strokeDasharray="2 3" /></I>
          </Grip>
          <FxBox>
            <button aria-label="取消"><I w={12} h={12}><path d="M1 1l10 10M11 1L1 11" stroke="#c0c0c0" strokeWidth="2" /></I></button>
            <button aria-label="输入"><I w={14} h={12}><path d="M1 7l4 4L13 1" stroke="#c0c0c0" strokeWidth="2.500" /></I></button>
            <button aria-label="插入函数">
              <I w={14} h={16}>
                <text x="1" y="12" fontFamily="Liberation Serif, serif" fontStyle="italic" fontWeight="700" fontSize="14" fill="#555">fx</text>
              </I>
            </button>
          </FxBox>
          <FormulaBox>
            <input aria-label="编辑栏" defaultValue="87" />
            <button aria-label="展开编辑栏"><I w={9} h={6}><path d="M1 1l3.500 3.500L8 1" stroke="#777" strokeWidth="2" /></I></button>
          </FormulaBox>
        </FormulaRow>

        <Main>
          <SheetColumn>
            <GridRow>
              <Canvas>
                <Sheet />
                <SlicerBox title="班级" items={["1班", "2班", "3班"]} x={754} w={161} h={176} line="#ed7d31" fill="#f8cbad" />
                <SlicerBox title="科目" items={subjects} x={916} w={159} h={178} line="#5b9bd5" fill="#bdd7ee" />
                <Chart />
              </Canvas>
              <VScroll>
                <ScrollButton aria-label="向上滚动"><Tri d="M0 6h8L4 2z" /></ScrollButton>
                <Space $g={256} />
                <Thumb $g={246} />
                <Space $g={218} />
                <ScrollButton aria-label="向下滚动"><Tri d="M0 2h8L4 6z" /></ScrollButton>
              </VScroll>
            </GridRow>
            <TabBar>
              <SheetArrows>
                <I w={5} h={8}><path d="M5 0v8L0 4z" fill="#c0c0c0" /></I>
                <I w={5} h={8}><path d="M0 0v8l5-4z" fill="#c0c0c0" /></I>
              </SheetArrows>
              <SheetTab $active>成绩表</SheetTab>
              <SheetTab>员工信息</SheetTab>
              <TabRule />
              <SheetTab>田字格</SheetTab>
              <TabRule />
              <SheetTab $fill="#bdd7ee">XXX公司销售额</SheetTab>
              <TabRule />
              <SheetTab $fill="#f4b084">课程表</SheetTab>
              <TabRule />
              <SheetTab>Sheet5</SheetTab>
              <TabRule />
              <AddSheet aria-label="新工作表">
                <I w={16} h={16}>
                  <circle cx="8" cy="8" r="7.500" stroke="#777" />
                  <path d="M4 8h8M8 4v8" stroke="#777" strokeWidth="1.500" />
                </I>
              </AddSheet>
              <Push />
              <I w={3} h={10}><path d="M1.500 0v10" stroke="#aaa" strokeWidth="2" strokeDasharray="2 2" /></I>
              <HScroll>
                <ScrollButton aria-label="向左滚动"><Tri d="M6 0v8L2 4z" /></ScrollButton>
                <Thumb $g={222} />
                <Space $g={206} />
                <ScrollButton aria-label="向右滚动"><Tri d="M2 0v8l4-4z" /></ScrollButton>
              </HScroll>
            </TabBar>
          </SheetColumn>

          <Pane>
            <PaneTitle>
              <h1>数据透视表字段</h1>
              <Caret $s={5} />
              <button aria-label="关闭窗格"><I w={10} h={10}><path d="M1 1l8 8M9 1L1 9" stroke="#666" strokeWidth="2" /></I></button>
            </PaneTitle>
            <PaneTool>
              选择要添加到报表的字段:
              <GearButton aria-label="工具">
                <I w={14} h={14}>
                  <circle cx="7" cy="7" r="3.500" stroke="#999" strokeWidth="3" />
                  <circle cx="7" cy="7" r="5.500" stroke="#999" strokeWidth="2" strokeDasharray="3 2.760" />
                </I>
                <Caret $s={4} />
              </GearButton>
            </PaneTool>
            <Search>
              <input aria-label="搜索" placeholder="搜索" />
              <I w={14} h={14}>
                <circle cx="9" cy="5" r="4" stroke={B} strokeWidth="1.500" />
                <path d="M6 8l-5 5" stroke={B} strokeWidth="2.500" />
              </I>
            </Search>
            <FieldList>
              {["班级", "科目", "平均分"].map((f) => (
                <Check key={f} $bold>
                  <input type="checkbox" defaultChecked />
                  {f}
                </Check>
              ))}
              <MoreTables href="#more">更多表格...</MoreTables>
            </FieldList>
            <DragHint>在以下区域间拖动字段:</DragHint>
            <Areas>
              <Area>
                <h3><I w={12} h={12}><path d="M0 0h12L7.500 5v7h-3V5z" fill="#8a8a8a" /></I>筛选器</h3>
                <DropZone />
              </Area>
              <Area $right>
                <h3><I w={11} h={12}><path d="M1.500 1v10" stroke="#8a8a8a" strokeWidth="3" /><path d="M4.500 1v10M7.500 1v10M10.500 1v10" stroke="#8a8a8a" /></I>列</h3>
                <DropZone />
              </Area>
              <Area $low>
                <h3><I w={12} h={11}><path d="M1 2h10" stroke="#8a8a8a" strokeWidth="3" /><path d="M1 5.500h10M1 7.500h10M1 9.500h10" stroke="#8a8a8a" /></I>行</h3>
                <DropZone>
                  <FieldChip>班级<Caret $s={4} $c="#000" /></FieldChip>
                  <FieldChip>科目<Caret $s={4} $c="#000" /></FieldChip>
                </DropZone>
              </Area>
              <Area $right $low>
                <h3><I w={11} h={12}><path d="M9.500 3V1H1.500l4 4.500-4 4.500h8V8" stroke="#8a8a8a" strokeWidth="1.300" /></I>值</h3>
                <DropZone>
                  <FieldChip>求和项:平均分<Caret $s={4} $c="#000" /></FieldChip>
                </DropZone>
              </Area>
            </Areas>
            <PaneFoot>
              <Check>
                <input type="checkbox" />
                推迟布局更新
              </Check>
              <UpdateButton disabled>更新</UpdateButton>
            </PaneFoot>
          </Pane>
        </Main>

        <Status>
          <StatusRow>
            <StatusText>就绪</StatusText>
            <StatusText>数字</StatusText>
            <I w={14} h={14}>
              <path d="M4 4h9v9H4z" fill="#fff" stroke="#777" />
              <path d="M5 3h9v3H5zM6 8h2v1H6zM9 8h3v1H9zM6 11h2v1H6zM9 11h3v1H9z" fill="#777" />
              <circle cx="3" cy="4" r="3" fill="#777" />
            </I>
            <Push />
            <ViewButton $on aria-label="普通">
              <I w={13} h={13}><path d="M.5 .5h12v12H.5zM4.500 0v13M8.500 0v13M0 4.500h13M0 8.500h13" stroke="#777" /></I>
            </ViewButton>
            <ViewButton aria-label="页面布局">
              <I w={13} h={13}><path d="M.5 .5h12v12H.5zM3.500 2.500h6v9h-6zM5 5h3M5 7h3M5 9h3" stroke="#777" /></I>
            </ViewButton>
            <ZoomRange type="range" min={10} max={190} defaultValue={90} aria-label="缩放" />
            <I w={10} h={10}><path d="M0 5h10M5 0v10" stroke="#555" strokeWidth="2" /></I>
            <ZoomValue>80%</ZoomValue>
          </StatusRow>
        </Status>
      </Window>

      <Ime>
        CH
        <I w={11} h={12}><path d="M6 1q5 4 1 9-3 2-6 0 5 0 5-3.500T6 1z" stroke="#333" /></I>
        简
      </Ime>
      <Watermark>
        <I w={43} h={41}>
          <defs>
            <linearGradient id="leaf" x1="0" y1="1" x2="1" y2="0">
              <stop offset="0" stopColor="#f3e14b" />
              <stop offset=".5" stopColor="#5dbb63" />
              <stop offset="1" stopColor="#4fb05c" />
            </linearGradient>
            <linearGradient id="wave" x1="0" y1="1" x2="1" y2="0">
              <stop offset="0" stopColor="#2f74bd" />
              <stop offset="1" stopColor="#6cc3ee" />
            </linearGradient>
          </defs>
          <path d="M44 1C22-1 2 6 1 19c0 7 4 11 11 12-6-8-5-15 4-21Q26 4 44 1z" fill="url(#wave)" />
          <path d="M31 11Q16 8 12 18q-2 9 7 9 8-1 10-8-4 4-8 2-3-4 10-10z" fill="url(#wave)" />
          <path d="M34 9q10 6 5 16Q30 38 5 40q17-5 23-15 5-8 6-16z" fill="url(#leaf)" />
        </I>
        <div>
          <p>极光下载站</p>
          <small>www.xz7.com</small>
        </div>
      </Watermark>

      <Pointer $x={724} $y={58} $shadow width="30" height="120">
        <path d="M2 2l12 20-5 1L28 115q-1 3-4 1L6 26l-5 3z" fill="#f00" />
      </Pointer>
      <Pointer $x={690} $y={407} $shadow width="44" height="64">
        <path d="M0 0l20 17-4 3L42 59q-1 3-4 2L13 22l-4 3z" fill="#f00" />
      </Pointer>
      <Pointer $x={737} $y={56} width="14" height="20">
        <path d="M.5 .5v15l3.500-3 3 6.500 3-1.500-3-6h5z" fill="#fff" stroke="#223" />
      </Pointer>
    </Desktop>
  );
}
